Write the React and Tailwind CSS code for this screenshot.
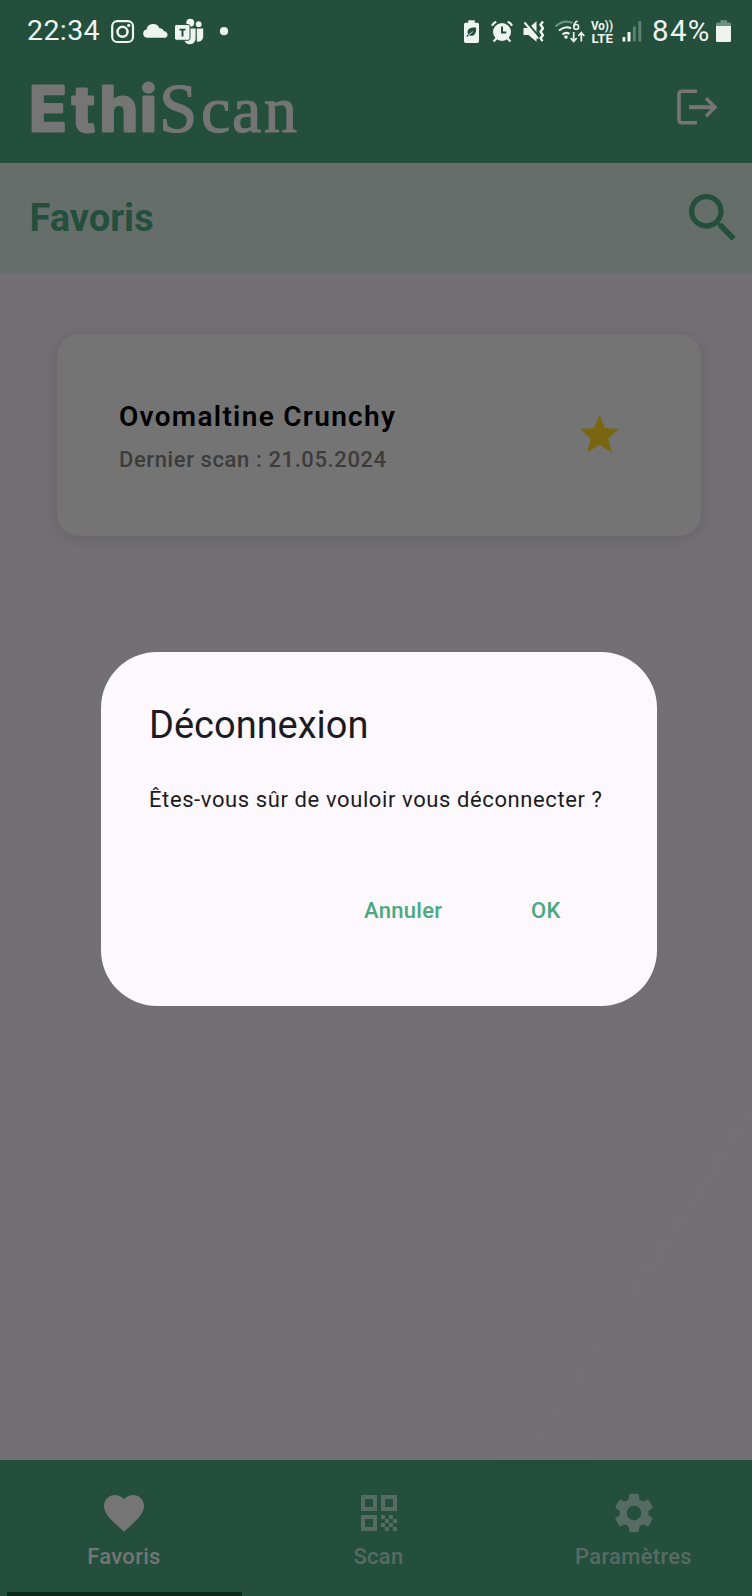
import React from "react";
import { MdSearch, MdStar, MdFavorite, MdQrCode, MdSettings } from "react-icons/md";

const BG = "#244f3c";

function LeftStatusIcons() {
  return (
    <svg className="h-[30px] w-[124px]" viewBox="108 16 124 30" fill="#eef4f0">
      <g fill="none" stroke="#eef4f0">
        <rect x="112.2" y="21.2" width="20.8" height="20.8" rx="5" strokeWidth="2.2" />
        <circle cx="122.5" cy="31.8" r="5" strokeWidth="2.5" />
      </g>
      <circle cx="128.7" cy="25.4" r="1.6" />
      <path d="M147 37.800a4.200 4.200 0 0 1-.5-8.300a6.800 6.800 0 0 1 13-1.200a4 4 0 0 1 4.300 2.600c5 .8 5 6.900 0 6.900z" />
      <circle cx="190.300" cy="22.800" r="4" />
      <circle cx="198.700" cy="24.200" r="2.900" />
      <path d="M196.800 28.500h6.400v8.500a5 5 0 0 1-6.400 4.600z" />
      <path d="M184 28.500h11.600v9.500a5.800 5.800 0 0 1-11.600 1z" />
      <rect x="174.500" y="24.500" width="15.500" height="15.800" rx="2" stroke={BG} strokeWidth="1" />
      <path d="M179.500 28.800h6v1.800h-2v6h-2v-6h-2z" fill={BG} />
      <circle cx="224" cy="31.200" r="4.100" />
    </svg>
  );
}

function RightStatusIcons() {
  return (
    <svg className="h-[30px] w-[184px]" viewBox="463 16 184 30" fill="#eef4f0">
      <path d="M468.300 22.700v-2.500h6.500v2.500h2.600q1.600 0 1.600 1.600v17q0 1.600-1.600 1.600h-11.800q-1.600 0-1.600-1.600v-17q0-1.600 1.600-1.600z" />
      <path d="M476 27.500c-5-.2-8.500 1-8.500 4.500 0 1 .2 1.700.7 2.300l-2 1.800 1 1 2-1.800c4 1.800 7.500-1 6.800-7.800z" fill={BG} />
      <path d="M468 35.500l5-4" stroke="#eef4f0" strokeWidth=".8" />
      <circle cx="502" cy="32" r="9" />
      <path d="M502 26.500v6h4.300" fill="none" stroke={BG} strokeWidth="2" />
      <path d="M492 25.800q1.300-3 4.300-4M512 25.800q-1.300-3-4.300-4M496.500 38.500l-3 3M507.500 38.500l3 3" fill="none" stroke="#eef4f0" strokeWidth="2.200" />
      <path d="M523.500 28h5l8-6.800v20.600l-8-6.800h-5z" />
      <path d="M525.500 20.500l14 17" stroke={BG} strokeWidth="2" />
      <path d="M524.500 22.500l13.500 16" stroke="#eef4f0" strokeWidth="2.200" />
      <path d="M543 21.500l-2.500 3.200 2.500 3.500-2.500 3.500 2.500 3.500-2.500 3 2 3" fill="none" stroke="#eef4f0" strokeWidth="2.400" strokeLinejoin="round" />
      <path d="M555.500 26.500q8-7.500 17-3.500" fill="none" stroke="#6b9280" strokeWidth="2.200" />
      <path d="M559 30.500q6-5 12-2.300M562.500 34.500q3.500-2.700 7-.6" fill="none" stroke="#eef4f0" strokeWidth="2.200" />
      <circle cx="566" cy="37" r="1.800" />
      <circle cx="576.200" cy="26.900" r="2.400" fill="none" stroke="#eef4f0" strokeWidth="1.600" />
      <path d="M577.500 21q-3.500 1.500-3.600 5.500M573.700 32v9M570.700 38l3 3.500 3-3.500M581.300 41.500v-8.500M578.300 36l3-3.500 3 3.500" fill="none" stroke="#eef4f0" strokeWidth="1.700" />
      <g fontFamily="Roboto, sans-serif" fontWeight="700">
        <text x="591" y="29.800" fontSize="12" textLength="22" lengthAdjust="spacingAndGlyphs">Vo))</text>
        <text x="591.500" y="42.500" fontSize="13.500" textLength="21.500" lengthAdjust="spacingAndGlyphs">LTE</text>
      </g>
      <rect x="622.500" y="37" width="2.800" height="4.500" />
      <rect x="627.500" y="32" width="3" height="9.500" />
      <g fill="#5d8371">
        <rect x="632.900" y="26.500" width="2.800" height="15" />
        <rect x="638.400" y="21" width="2.800" height="20.500" />
      </g>
    </svg>
  );
}

function StatusBar() {
  return (
    <div className="flex h-[62px] items-center justify-between pl-[27px] pr-[20px] text-[#eef4f0]">
      <div className="flex items-center">
        <span className="w-[81px] text-[28.500px] leading-[30px] tracking-[0.4px]">22:34</span>
        <LeftStatusIcons />
      </div>
      <div className="flex items-center">
        <RightStatusIcons />
        <span className="ml-[5px] w-[63px] text-[29.500px] leading-[30px] tracking-[1.300px]">84%</span>
        <svg className="ml-px h-[24px] w-[16px]" viewBox="716 19 16 24">
          <path d="M720.500 22.500v-2.300h6.500v2.300h2.500q1.500 0 1.500 1.500v2.500h-15v-2.500q0-1.500 1.500-1.500z" fill="#6b9280" />
          <path d="M716 26h15v14.500q0 1.500-1.500 1.500h-12q-1.500 0-1.500-1.500z" fill="#eef4f0" />
        </svg>
      </div>
    </div>
  );
}

function Logo() {
  return (
    <svg className="h-[90px] w-[280px]" viewBox="28 62 280 90" fill="#757575" role="img" aria-label="EthiScan">
      <text x="29 72 99.500 140" y="130.500" fontFamily="Inter, sans-serif" fontWeight="700" fontSize="62" stroke="#757575" strokeWidth="3" strokeLinejoin="round">Ethi</text>
      <text x="159 201 232 264" y="131.500" fontFamily="'Liberation Serif', serif" fontSize="69" stroke="#757575" strokeWidth="1.200">
        S<tspan fontSize="66">can</tspan>
      </text>
    </svg>
  );
}

function NavItem({ icon: Icon, label, className }) {
  return (
    <div className={"flex shrink-0 flex-col items-center pt-[29px] " + className}>
      <Icon className="size-[48px]" />
      <span className="mt-[6px] text-[22px] font-medium leading-[28px] tracking-[0.3px]">{label}</span>
    </div>
  );
}

function Dialog() {
  return (
    <div className="absolute left-[101px] top-[652px] flex h-[354px] w-[556px] flex-col rounded-[56px] bg-[#fcf8fe] px-[48px] pt-[50px] text-[#1c1b1f]">
      <h2 className="text-[38px] leading-[46px]">Déconnexion</h2>
      <p className="mt-[37px] whitespace-nowrap text-[22px] leading-[30px] tracking-[0.6px]">Êtes-vous sûr de vouloir vous déconnecter ?</p>
      <div className="mt-[81px] flex text-[22px] font-medium leading-[30px] tracking-[0.300px] text-[#4aa980]">
        <button className="ml-[215px] w-[167px] text-left">Annuler</button>
        <button>OK</button>
      </div>
    </div>
  );
}

export default function App() {
  return (
    <div className="relative flex h-[1596px] w-[752px] flex-col overflow-hidden bg-[#727075] font-['Roboto',sans-serif]">
      <header className="h-[163px] bg-[#244f3c]">
        <StatusBar />
        <div className="flex items-center justify-between pl-[28px] pr-[34px]">
          <Logo />
          <svg className="h-[37px] w-[42px]" viewBox="676 88.500 42 37" fill="none" stroke="#757575">
            <path d="M697 90.700h-15q-3 0-3 3v25.500q0 3 3 3h15" strokeWidth="3.600" />
            <path d="M689 106.700h26" strokeWidth="4" />
            <path d="M706 97.700l9 9-9 9" strokeWidth="3.600" />
          </svg>
        </div>
      </header>
      <div className="flex h-[111px] items-center justify-between bg-[#666e6c] pb-[2px] pl-[29.500px] pr-[7px] text-[#244f3c]">
        <h1 className="text-[38px] font-bold leading-[44px]">Favoris</h1>
        <MdSearch className="size-[64px]" />
      </div>
      <main className="flex-1 bg-linear-to-br from-[#727075] from-75% to-[#746f72] to-90% px-[57px] pt-[60px]">
        <div className="flex h-[202px] w-[644px] items-center justify-between rounded-[22px] bg-[#747474] pl-[62px] pr-[78px] shadow-[0_2px_14px_2px_rgba(0,0,0,0.10)]">
          <div className="pt-[4px]">
            <div className="text-[28px] font-semibold leading-[36px] tracking-[1.300px] text-black">Ovomaltine Crunchy</div>
            <div className="mt-[10px] text-[22px] font-medium leading-[30px] tracking-[0.6px] text-[#3d3b3b]">Dernier scan : 21.05.2024</div>
          </div>
          <MdStar className="mb-[2px] size-[47px] text-[#7a6510]" />
        </div>
      </main>
      <nav className="relative flex h-[136px] bg-[#244f3c] text-[#566b63]">
        <NavItem icon={MdFavorite} label="Favoris" className="w-[248px] text-[#757575]" />
        <NavItem icon={MdQrCode} label="Scan" className="w-[261px]" />
        <NavItem icon={MdSettings} label="Paramètres" className="w-[249px]" />
        <div className="absolute bottom-0 left-[7px] h-[4px] w-[235px] bg-[#0b291d]" />
      </nav>
      <Dialog />
    </div>
  );
}
